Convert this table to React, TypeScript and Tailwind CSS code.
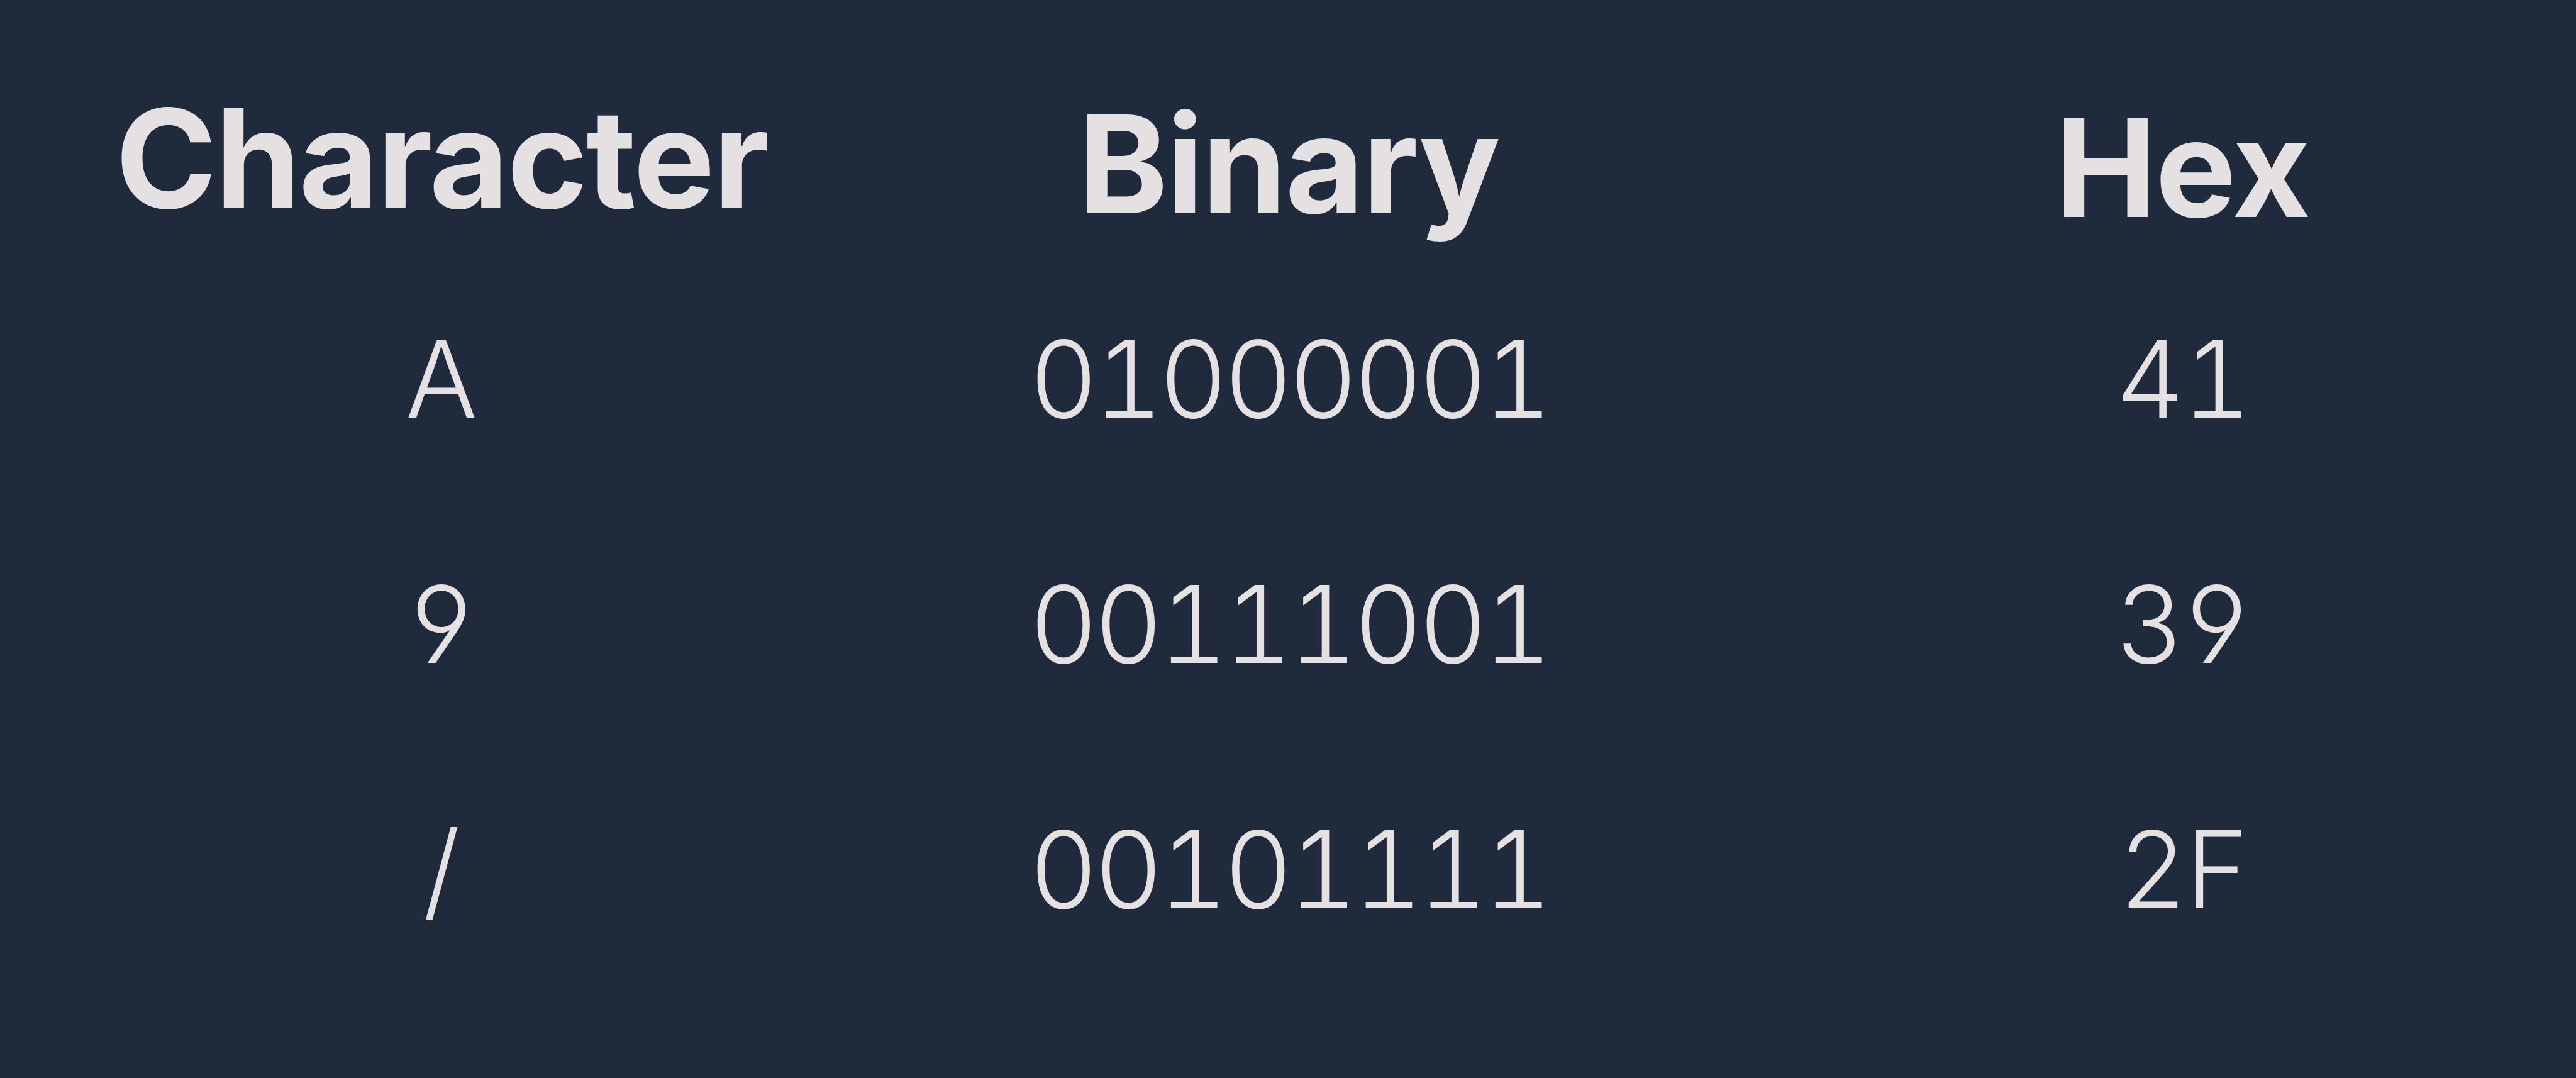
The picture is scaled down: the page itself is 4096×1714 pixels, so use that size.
import React from 'react';

const rows = [
  { char: 'A', bin: '01000001', hex: '41' },
  { char: '9', bin: '00111001', hex: '39' },
  { char: '/', bin: '00101111', hex: '2F' },
];

const App = () => {
  return (
    <div
      className="min-h-[1714px] w-full overflow-hidden bg-[#1f2a3d] text-[#e5e0e1] pt-[143px]"
      style={{ fontFamily: 'Inter, "Liberation Sans", sans-serif' }}
    >
      <div className="grid grid-cols-[1404px_1290px_1fr] items-start">
        <div className="text-center text-[218px] font-bold leading-none tracking-[-0.012em]">Character</div>
        <div className="text-center text-[216px] font-bold leading-none mt-[10px] tracking-[-0.01em]">Binary</div>
        <div className="pl-[150px] text-center text-[216px] font-bold leading-none mt-[16px] tracking-[-0.01em]">Hex</div>
      </div>

      <div className="mt-[142px] flex flex-col gap-[220px]">
        {rows.map((r) => (
          <div
            key={r.bin}
            className="grid grid-cols-[1404px_1290px_1fr] text-[170px] font-light leading-none tabular-nums [font-feature-settings:'cv04']"
          >
            <div className="text-center">{r.char}</div>
            <div className="text-center tracking-[-0.04em]">{r.bin}</div>
            <div className="pl-[150px] text-center tracking-[-0.02em]">{r.hex}</div>
          </div>
        ))}
      </div>
    </div>
  );
};

export default App;
